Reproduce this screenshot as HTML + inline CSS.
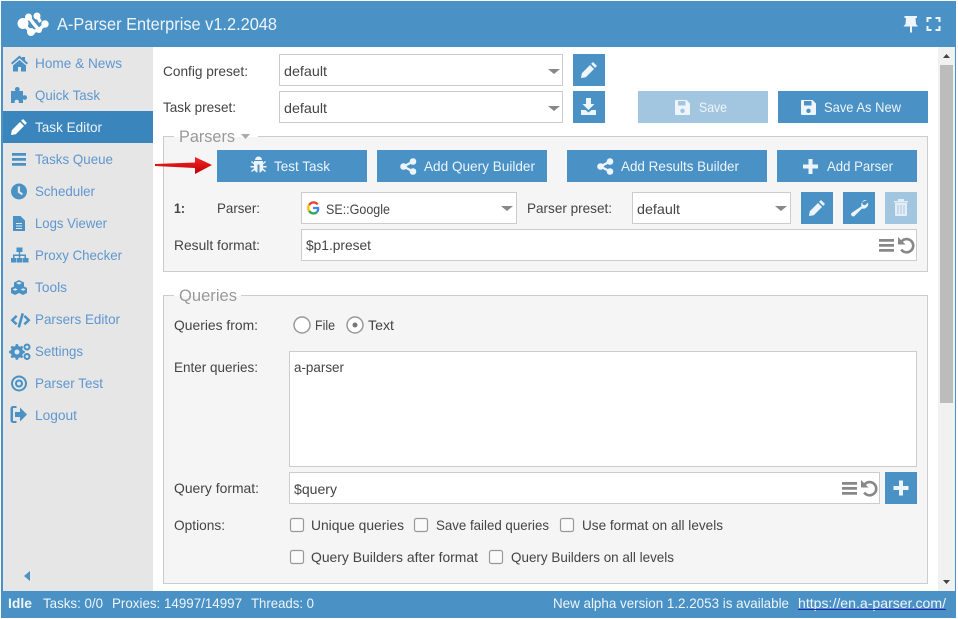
<!DOCTYPE html>
<html><head><meta charset="utf-8"><title>A-Parser</title>
<style>
html,body{margin:0;padding:0;background:#fff;width:958px;height:619px;overflow:hidden}
svg{display:block}
text{font-family:"Liberation Sans",sans-serif;font-size:14px;fill:#444}
.s text,text.s{fill:#5f97cf}
.w text,text.w{fill:#eef5fa}
</style></head><body>
<svg width="958" height="619" viewBox="0 0 958 619" xmlns="http://www.w3.org/2000/svg">
<defs>
<linearGradient id="ar" x1="0" y1="0" x2="0" y2="1"><stop offset="0" stop-color="#f02828"/><stop offset="1" stop-color="#c00000"/></linearGradient>
<g id="pencil"><path d="M12 0l4 4-1.900 1.900-4-4zM9 3l4 4-8.200 8.200L0 16l.8-4.800z"/></g>
<g id="floppy"><path fill-rule="evenodd" d="M1 0H11.500L15 3.500V14a1 1 0 0 1-1 1H1a1 1 0 0 1-1-1V1a1 1 0 0 1 1-1zM3 1V5.500H10.500V1zM7.500 8.600a2.200 2.200 0 1 0 .01 0z"/></g>
<g id="share"><circle cx="12.500" cy="3" r="3.300"/><circle cx="12.500" cy="13" r="3.300"/><circle cx="3" cy="8" r="3.300"/><path d="M3 8L12.500 3M3 8L12.500 13" stroke-width="2.400" fill="none" stroke="currentColor"/></g>
<g id="plus"><path d="M5.500 0h4v5.500H15v4H9.500V15h-4V9.500H0v-4h5.500z"/></g>
<g id="ham"><path d="M0 0h15v2.800H0zM0 5h15v2.800H0zM0 10h15v2.800H0z"/></g>
<g id="undo"><path d="M3.600 4.400A6.600 6.600 0 1 1 3.200 12.500" fill="none" stroke="#888" stroke-width="2.600"/><path d="M0 0V7.500H7.500z" fill="#888"/></g>
<path id="arrow" d="M0 0h12L6 5z"/>
</defs>

<!-- window -->
<rect x="1" y="1" width="955" height="617" fill="#4a91c5"/>
<rect x="3" y="47" width="952" height="544" fill="#fff"/>
<rect x="3" y="47" width="150" height="544" fill="#e6e6e6"/>
<rect x="3" y="111" width="150" height="32" fill="#3a85bc"/>

<!-- header logo -->
<g fill="#fff">
<circle cx="23" cy="23.500" r="5.500"/><circle cx="28.500" cy="17" r="3.500"/><circle cx="37" cy="16" r="3.500"/><circle cx="45" cy="24" r="3.700"/><circle cx="31" cy="32" r="4"/><circle cx="39" cy="30" r="3"/>
<path d="M23 23.500L28.500 17L34 24L39 30L45 24M23 23.500L31 32L39 30M37 16L40.500 22" fill="none" stroke="#fff" stroke-width="3.400"/>
</g>
<text class="w" x="57" y="30" style="font-size:17.500px" textLength="220" lengthAdjust="spacingAndGlyphs">A-Parser Enterprise v1.2.2048</text>
<g fill="#eef5fa">
<path d="M905 16h12.500v2h-1.500l.5 6 2 2.500H912.500v6h-2v-6H904l2-2.500.5-6H905z" transform="translate(-.5,0)"/>
<path d="M926.500 22v-5h5v2h-3v3zM935.500 17h5v5h-2v-3h-3zM926.500 26h2v3h3v2h-5zM938.500 26h2v5h-5v-2h3z"/>
</g>

<!-- sidebar icons -->
<g fill="#4a91c5">
<path d="M19.500 55.500L11 63l1.300 1.500 7.200-6.300 7.200 6.300L28 63l-3-2.700V57h-3v1zM13 65.500L19.500 60l6.500 5.500V71.500h-5v-4.500h-3v4.500h-5z"/>
<path d="M11 91h4.500c-1.200-1.800-.5-4 1.800-4s3 2.200 1.800 4H23v4.800c1.800-1.200 4-.5 4 1.700s-2.200 3-4 1.800V103h-4.500c1.200-2-.3-3.300-1.700-3.300s-3 1.300-1.800 3.300H11z"/>
<use href="#pencil" x="11" y="119" fill="#fff"/>
<path d="M12 153h14v2.800H12zM12 158h14v2.800H12zM12 163h14v2.800H12z"/>
<path fill-rule="evenodd" d="M19 183.500a8 8 0 1 0 .01 0zM17.800 186.500h2.200v5l3 2-1.100 1.700-4.100-2.700z"/>
<path fill-rule="evenodd" d="M13 216h7.500l4.500 4.500V231H13zM16 223v1h6v-1zM16 225.500v1h6v-1zM16 228v1h6v-1z"/>
<path d="M11 258h5.500v4.500H11zM17 258h5.500v4.500H17zM23 258h5.500v4.500H23zM16.500 247.500h6V252h-6zM18.800 252h1.400v2.500h5.800v4h-1.500v-2.500h-4.300v2.500h-1.400v-2.500h-4.300v2.500H13v-4h5.800z"/>
<path fill-rule="evenodd" d="M19 280l5 2.500v4l3 1.500v5l-4 2-4-2-4 2-4-2v-5l3-1.500v-4zM16 283l3 1.500 3-1.500-3-1.200zM12.500 289.500l2.700 1.300 2.500-1.300-2.500-1.200zM20.500 289.500l2.700 1.300 2.500-1.300-2.500-1.200z"/>
<path d="M17.500 327l4-14 2.500.7-4 14zM15.800 315l1.700 1.800-3.500 3.300 3.500 3.300-1.700 1.800-5.300-5.100zM25.200 315l5.300 5.100-5.300 5.100-1.700-1.800 3.500-3.300-3.500-3.300z"/>
<path fill-rule="evenodd" d="M16 344l2 .2.500 1.800 1.500.7 1.700-1 1.500 1.500-1 1.700.7 1.500 1.800.5v2.200l-1.800.5-.7 1.500 1 1.700-1.500 1.500-1.700-1-1.500.7-.5 1.800h-2.200l-.5-1.800-1.500-.7-1.700 1-1.500-1.500 1-1.700-.7-1.500-1.800-.5v-2.200l1.800-.5.7-1.500-1-1.700 1.500-1.500 1.700 1 1.500-.7.5-1.800zM17 349.500a2.500 2.500 0 1 0 .01 0z"/>
<path fill-rule="evenodd" d="M27 343.500a3.500 3.500 0 1 0 .01 0zM27 345.500a1.500 1.500 0 1 1-.01 0zM27 353a3.500 3.500 0 1 0 .01 0zM27 355a1.500 1.500 0 1 1-.01 0z"/>
<path fill-rule="evenodd" d="M19 375.500a8 8 0 1 0 .01 0zM19 377.500a6 6 0 1 1-.01 0zM19 379.500a4 4 0 1 0 .01 0zM19 381.500a2 2 0 1 1-.01 0z"/>
<path d="M16.500 408H13v13h3.500v2H13a2.500 2.500 0 0 1-2.500-2.500v-12A2.500 2.500 0 0 1 13 406h3.500z"/>
<path d="M15 412h5V407.500l7 7-7 7V417h-5z"/>
<path d="M30 571v10l-6-5z"/>
</g>

<!-- sidebar text -->
<g class="s">
<text x="35" y="68" textLength="87" lengthAdjust="spacingAndGlyphs">Home &amp; News</text>
<text x="35" y="100" textLength="65" lengthAdjust="spacingAndGlyphs">Quick Task</text>
<text x="35" y="164" textLength="78" lengthAdjust="spacingAndGlyphs">Tasks Queue</text>
<text x="35" y="196" textLength="60" lengthAdjust="spacingAndGlyphs">Scheduler</text>
<text x="35" y="228" textLength="72" lengthAdjust="spacingAndGlyphs">Logs Viewer</text>
<text x="35" y="260" textLength="87" lengthAdjust="spacingAndGlyphs">Proxy Checker</text>
<text x="35" y="292" textLength="32" lengthAdjust="spacingAndGlyphs">Tools</text>
<text x="35" y="324" textLength="85" lengthAdjust="spacingAndGlyphs">Parsers Editor</text>
<text x="35" y="356" textLength="48" lengthAdjust="spacingAndGlyphs">Settings</text>
<text x="35" y="388" textLength="68" lengthAdjust="spacingAndGlyphs">Parser Test</text>
<text x="35" y="420" textLength="42" lengthAdjust="spacingAndGlyphs">Logout</text>
</g>
<text class="w" x="35" y="132" textLength="67" lengthAdjust="spacingAndGlyphs">Task Editor</text>

<!-- top form -->
<text x="163" y="76" textLength="85" lengthAdjust="spacingAndGlyphs">Config preset:</text>
<text x="163" y="112" textLength="73" lengthAdjust="spacingAndGlyphs">Task preset:</text>
<rect x="279.500" y="54.500" width="283" height="31" fill="#fff" stroke="#ccc"/>
<rect x="279.500" y="91.500" width="283" height="31" fill="#fff" stroke="#ccc"/>
<text x="284" y="76" textLength="43" lengthAdjust="spacingAndGlyphs">default</text>
<text x="284" y="113" textLength="43" lengthAdjust="spacingAndGlyphs">default</text>
<use href="#arrow" x="548" y="69" fill="#888"/>
<use href="#arrow" x="548" y="106" fill="#888"/>
<rect x="573" y="54" width="32" height="32" fill="#4a91c5"/>
<rect x="573" y="91" width="32" height="32" fill="#4a91c5"/>
<use href="#pencil" x="581" y="62" fill="#eef5fa"/>
<path fill="#eef5fa" d="M586 98h5v6h3.500l-6 6-6-6H586zM581 110h4.500l3 2.500 3-2.500h4.500v5h-15z"/>
<rect x="638" y="91" width="130" height="32" fill="#a3c6e0"/>
<rect x="778" y="91" width="150" height="32" fill="#4a91c5"/>
<use href="#floppy" x="675" y="100" fill="#eef5fa"/>
<use href="#floppy" x="801" y="100" fill="#eef5fa"/>
<text class="w" x="699" y="112" textLength="28" lengthAdjust="spacingAndGlyphs">Save</text>
<text class="w" x="824" y="112" textLength="77" lengthAdjust="spacingAndGlyphs">Save As New</text>

<!-- parsers fieldset -->
<rect x="163.500" y="136.500" width="764" height="135" fill="#f5f5f5" stroke="#ccc"/>
<rect x="174" y="130" width="84" height="7" fill="#fff"/>
<rect x="174" y="137" width="84" height="6" fill="#f5f5f5"/>
<text x="179" y="142" style="font-size:17px;fill:#999" textLength="56" lengthAdjust="spacingAndGlyphs">Parsers</text>
<path d="M241 134h9l-4.500 5z" fill="#aaa"/>
<rect x="217" y="150" width="150" height="32" fill="#4a91c5"/>
<rect x="377" y="150" width="170" height="32" fill="#4a91c5"/>
<rect x="567" y="150" width="200" height="32" fill="#4a91c5"/>
<rect x="777" y="150" width="140" height="32" fill="#4a91c5"/>
<path fill="#eef5fa" d="M255 160a3.500 3.500 0 0 1 7 0zM254 161h9v2l2-2 1 1-3 2.500v1.500h3.500v1.500H263v1l3 2.500-1 1-2.500-2a4 4 0 0 1-3 2.500v-8h-2v8a4 4 0 0 1-3-2.500l-2.500 2-1-1 3-2.500v-1h-3.500V166H254v-1.500L251 162l1-1 2 2z"/>
<g fill="#eef5fa" color="#eef5fa">
<use href="#share" x="400.500" y="158.500"/>
<use href="#share" x="597.500" y="158.500"/>
</g>
<use href="#plus" x="803" y="159" fill="#eef5fa"/>
<text class="w" x="274" y="171" textLength="56" lengthAdjust="spacingAndGlyphs">Test Task</text>
<text class="w" x="424" y="171" textLength="111" lengthAdjust="spacingAndGlyphs">Add Query Builder</text>
<text class="w" x="621" y="171" textLength="118" lengthAdjust="spacingAndGlyphs">Add Results Builder</text>
<text class="w" x="827" y="171" textLength="66" lengthAdjust="spacingAndGlyphs">Add Parser</text>
<path d="M155 164L195 162.500V157L212 165L195 174V168L155 166z" fill="url(#ar)"/>

<text x="174" y="213" style="font-weight:bold" textLength="11" lengthAdjust="spacingAndGlyphs">1:</text>
<text x="217" y="213" textLength="43" lengthAdjust="spacingAndGlyphs">Parser:</text>
<rect x="301.500" y="192.500" width="215" height="31" fill="#fff" stroke="#ccc"/>
<g fill="none" stroke-width="2.300">
<path d="M317.600 204.500A5 5 0 0 0 309.200 205" stroke="#ea4335"/>
<path d="M309.200 205A5 5 0 0 0 309.200 211" stroke="#fbbc05"/>
<path d="M309.200 211A5 5 0 0 0 317 212" stroke="#34a853"/>
<path d="M317 212A5 5 0 0 0 318.100 208H313" stroke="#4285f4"/>
</g>
<text x="326" y="214" textLength="64" lengthAdjust="spacingAndGlyphs">SE::Google</text>
<use href="#arrow" x="501" y="206" fill="#888"/>
<text x="527" y="213" textLength="85" lengthAdjust="spacingAndGlyphs">Parser preset:</text>
<rect x="632.500" y="192.500" width="158" height="31" fill="#fff" stroke="#ccc"/>
<text x="637" y="214" textLength="43" lengthAdjust="spacingAndGlyphs">default</text>
<use href="#arrow" x="775" y="206" fill="#888"/>
<rect x="801" y="192" width="32" height="32" fill="#4a91c5"/>
<rect x="843" y="192" width="32" height="32" fill="#4a91c5"/>
<rect x="885" y="192" width="32" height="32" fill="#a3c6e0"/>
<use href="#pencil" x="809" y="200" fill="#eef5fa"/>
<path fill="#eef5fa" d="M867 200a4.800 4.800 0 0 0-5.500 6.200L851.500 213a2.200 2.200 0 0 0 .2 2.800 2.200 2.200 0 0 0 2.800.2l7.500-7.500a4.800 4.800 0 0 0 6-6l-2.800 2.800-2.500-.7-.7-2.500z"/>
<path fill-rule="evenodd" fill="#e4eef6" d="M894 201h14v1.500h-14zM898 199h6v2h-6zM895 203h12v12a1 1 0 0 1-1 1h-10a1 1 0 0 1-1-1zM897.500 205v9h1v-9zM900.500 205v9h1v-9zM903.500 205v9h1v-9z"/>
<text x="174" y="250" textLength="86" lengthAdjust="spacingAndGlyphs">Result format:</text>
<rect x="301.500" y="229.500" width="615" height="31" fill="#fff" stroke="#ccc"/>
<text x="306" y="250" textLength="65" lengthAdjust="spacingAndGlyphs">$p1.preset</text>
<use href="#ham" x="879" y="239" fill="#888"/>
<use href="#undo" x="898" y="237"/>

<!-- queries fieldset -->
<rect x="163.500" y="295.500" width="764" height="288" fill="#f5f5f5" stroke="#ccc"/>
<rect x="174" y="289" width="67" height="7" fill="#fff"/>
<rect x="174" y="296" width="67" height="6" fill="#f5f5f5"/>
<text x="179" y="301" style="font-size:17px;fill:#999" textLength="58" lengthAdjust="spacingAndGlyphs">Queries</text>
<text x="174" y="330" textLength="84" lengthAdjust="spacingAndGlyphs">Queries from:</text>
<circle cx="302" cy="325" r="8" fill="#fff" stroke="#999" stroke-width="1.500"/>
<text x="315" y="330" textLength="20" lengthAdjust="spacingAndGlyphs">File</text>
<circle cx="355" cy="325" r="8" fill="#fff" stroke="#999" stroke-width="1.500"/>
<circle cx="355" cy="325" r="2.500" fill="#777"/>
<text x="368" y="330" textLength="26" lengthAdjust="spacingAndGlyphs">Text</text>
<text x="174" y="372" textLength="84" lengthAdjust="spacingAndGlyphs">Enter queries:</text>
<rect x="289.500" y="351.500" width="627" height="115" fill="#fff" stroke="#ccc"/>
<text x="294" y="372" textLength="50" lengthAdjust="spacingAndGlyphs">a-parser</text>
<text x="174" y="493" textLength="85" lengthAdjust="spacingAndGlyphs">Query format:</text>
<rect x="289.500" y="472.500" width="590" height="31" fill="#fff" stroke="#ccc"/>
<text x="294" y="494" textLength="43" lengthAdjust="spacingAndGlyphs">$query</text>
<use href="#ham" x="842" y="482" fill="#888"/>
<use href="#undo" x="861" y="480"/>
<rect x="885" y="472" width="32" height="32" fill="#4a91c5"/>
<use href="#plus" x="893.500" y="480.500" fill="#eef5fa"/>
<text x="174" y="530" textLength="51" lengthAdjust="spacingAndGlyphs">Options:</text>
<g fill="#fafafa" stroke="#999" stroke-width="1.200">
<rect x="290.500" y="518.500" width="13" height="13" rx="2"/>
<rect x="414.500" y="518.500" width="13" height="13" rx="2"/>
<rect x="560.500" y="518.500" width="13" height="13" rx="2"/>
<rect x="290.500" y="550.500" width="13" height="13" rx="2"/>
<rect x="489.500" y="550.500" width="13" height="13" rx="2"/>
</g>
<text x="311" y="530" textLength="93" lengthAdjust="spacingAndGlyphs">Unique queries</text>
<text x="436" y="530" textLength="113" lengthAdjust="spacingAndGlyphs">Save failed queries</text>
<text x="582" y="530" textLength="141" lengthAdjust="spacingAndGlyphs">Use format on all levels</text>
<text x="311" y="562" textLength="167" lengthAdjust="spacingAndGlyphs">Query Builders after format</text>
<text x="511" y="562" textLength="163" lengthAdjust="spacingAndGlyphs">Query Builders on all levels</text>

<!-- scrollbar -->
<rect x="938" y="47" width="17" height="544" fill="#f1f1f1"/>
<rect x="940" y="65" width="13" height="338" fill="#bcbcbc"/>
<path d="M943 58l3.500-4 3.500 4z" fill="#444"/>
<path d="M943 580l3.500 4 3.500-4z" fill="#444"/>

<!-- status -->
<rect x="1" y="591" width="955" height="27" fill="#4a91c5"/>
<g class="w">
<text x="8" y="608" style="font-weight:bold" textLength="24" lengthAdjust="spacingAndGlyphs">Idle</text>
<text x="43" y="608" textLength="60" lengthAdjust="spacingAndGlyphs">Tasks: 0/0</text>
<text x="112" y="608" textLength="130" lengthAdjust="spacingAndGlyphs">Proxies: 14997/14997</text>
<text x="251" y="608" textLength="63" lengthAdjust="spacingAndGlyphs">Threads: 0</text>
<text x="553" y="608" textLength="236" lengthAdjust="spacingAndGlyphs">New alpha version 1.2.2053 is available</text>
<text x="798" y="608" textLength="148" lengthAdjust="spacingAndGlyphs">https://en.a-parser.com/</text>
</g>
<rect x="798" y="609" width="148" height="1" fill="#2222aa"/>
</svg>
</body></html>
